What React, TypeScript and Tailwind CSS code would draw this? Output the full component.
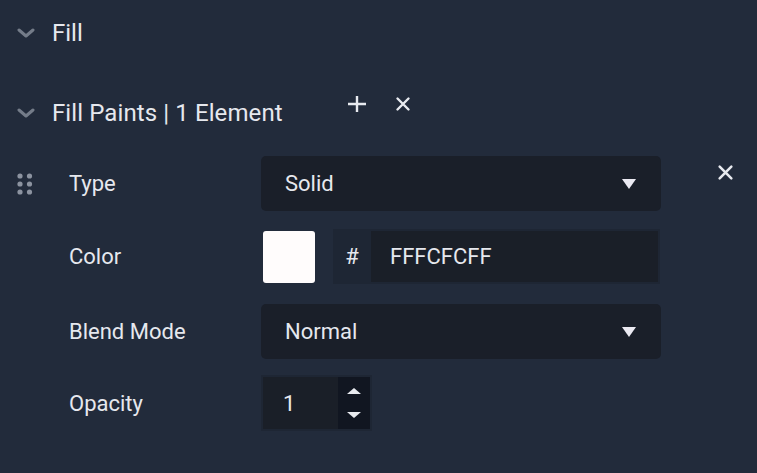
import React from "react";

function Chevron() {
  return (
    <svg width="18" height="12" viewBox="0 0 18 12" className="shrink-0">
      <polyline points="2,3 9,9 16,3" fill="none" stroke="#8a919e" strokeWidth="3" strokeLinecap="round" strokeLinejoin="round" opacity="0.8" />
    </svg>
  );
}

function Plus() {
  return (
    <svg width="22" height="22" viewBox="0 0 22 22">
      <path d="M11 3v16M2 11h18" stroke="#e8eaef" strokeWidth="2.4" />
    </svg>
  );
}

function Close({ size = 16 }: { size?: number }) {
  return (
    <svg width={size} height={size} viewBox="0 0 16 16">
      <path d="M2.5 2.5l11 11M13.5 2.5l-11 11" stroke="#e8eaef" strokeWidth="2.4" strokeLinecap="round" />
    </svg>
  );
}

function Caret() {
  return (
    <svg width="16" height="12" viewBox="0 0 16 12">
      <polygon points="1,1 15,1 8,11" fill="#ebeaf2" />
    </svg>
  );
}

function Handle() {
  return (
    <svg width="16" height="22" viewBox="0 0 16 22">
      {[3, 12.5].map((x) =>
        [3, 11, 19].map((y) => <circle key={`${x}-${y}`} cx={x} cy={y} r="2.6" fill="#8c93a0" />)
      )}
    </svg>
  );
}

function Select({ value }: { value: string }) {
  return (
    <div className="w-[400px] h-full rounded-[5px] bg-[#1a1f29] flex items-center justify-between pl-[24px] pr-[24px]">
      <span>{value}</span>
      <Caret />
    </div>
  );
}

export default function App() {
  return (
    <div
      className="w-[757px] h-[473px] bg-[#222b3b] text-[#e6e8ee] text-[22px] overflow-hidden"
      style={{ fontFamily: "Roboto, 'Liberation Sans', sans-serif" }}
    >
      {/* Fill */}
      <div className="h-[66px] flex items-center pl-[17px] text-[24px]">
        <Chevron />
        <span className="ml-[17px]">Fill</span>
      </div>

      {/* Fill Paints header */}
      <div className="mt-[14px] h-[66px] flex items-center pl-[17px] text-[24px]">
        <Chevron />
        <span className="ml-[17px] tracking-[0.1px]">Fill Paints | 1 Element</span>
        <div className="ml-[63px] -mt-[18px] flex items-center gap-[27px]">
          <Plus />
          <Close size={16} />
        </div>
      </div>

      {/* Rows */}
      <div className="mt-[10px] flex flex-col">
        {/* Type */}
        <div className="h-[55px] flex items-center">
          <div className="w-[69px] pl-[17px] flex items-center">
            <Handle />
          </div>
          <span className="w-[192px]">Type</span>
          <Select value="Solid" />
          <div className="ml-[56px] self-start mt-[8px]">
            <Close size={17} />
          </div>
        </div>

        {/* Color */}
        <div className="mt-[18px] h-[55px] flex items-center">
          <span className="w-[261px] pl-[69px]">Color</span>
          <div className="w-[52px] h-[52px] ml-[2px] rounded-[3px] bg-[#fffcfc]" />
          <div className="ml-[18px] w-[327px] h-[55px] bg-[#1e2634] flex items-center p-[2px] pl-0">
            <span className="w-[38px] text-center">#</span>
            <div className="flex-1 h-full bg-[#1a1f28] flex items-center pl-[19px]">FFFCFCFF</div>
          </div>
        </div>

        {/* Blend Mode */}
        <div className="mt-[20px] h-[55px] flex items-center">
          <span className="w-[261px] pl-[69px]">Blend Mode</span>
          <Select value="Normal" />
        </div>

        {/* Opacity */}
        <div className="mt-[16px] h-[56px] flex items-center">
          <span className="w-[261px] pl-[69px]">Opacity</span>
          <div className="w-[111px] h-[56px] bg-[#1e2634] p-[2px] flex">
            <div className="flex-1 bg-[#1a1f28] flex items-center pl-[20px]">1</div>
            <div className="w-[32px] bg-[#111621] flex flex-col items-center justify-center gap-[18px]">
              <svg width="14" height="6" viewBox="0 0 14 6">
                <polygon points="0,6 14,6 7,0" fill="#e8eaef" />
              </svg>
              <svg width="14" height="6" viewBox="0 0 14 6">
                <polygon points="0,0 14,0 7,6" fill="#e8eaef" />
              </svg>
            </div>
          </div>
        </div>
      </div>
    </div>
  );
}
